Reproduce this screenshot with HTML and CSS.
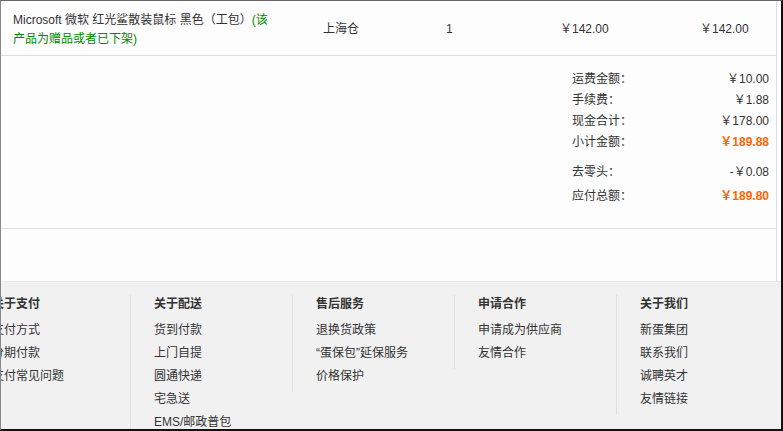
FILE: index.html
```html
<!DOCTYPE html>
<html lang="zh-CN">
<head>
    <meta charset="UTF-8">
    <title>订单确认</title>
    <link rel="stylesheet" href="styles.css">
</head>
<body>
    <div class="frame">
        <div class="order">
            <div class="item-row">
                <div class="cell name">Microsoft 微软 红光鲨散装鼠标 黑色（工包）<span class="gift">(该产品为赠品或者已下架)</span></div>
                <div class="cell">上海仓</div>
                <div class="cell">1</div>
                <div class="cell">￥142.00</div>
                <div class="cell">￥142.00</div>
            </div>
            <div class="summary">
                <div class="sum-row"><span>运费金额：</span><span>￥10.00</span></div>
                <div class="sum-row"><span>手续费：</span><span>￥1.88</span></div>
                <div class="sum-row"><span>现金合计：</span><span>￥178.00</span></div>
                <div class="sum-row"><span>小计金额：</span><span class="price">￥189.88</span></div>
                <div class="sum-row round"><span>去零头：</span><span>-￥0.08</span></div>
                <div class="sum-row total"><span>应付总额：</span><span class="price">￥189.80</span></div>
            </div>
        </div>

        <div class="footer">
            <div class="footer-cols">
                <div class="col">
                    <h4>关于支付</h4>
                    <a>支付方式</a>
                    <a>分期付款</a>
                    <a>支付常见问题</a>
                </div>
                <div class="col">
                    <h4>关于配送</h4>
                    <a>货到付款</a>
                    <a>上门自提</a>
                    <a>圆通快递</a>
                    <a>宅急送</a>
                    <a>EMS/邮政普包</a>
                </div>
                <div class="col">
                    <h4>售后服务</h4>
                    <a>退换货政策</a>
                    <a>“蛋保包”延保服务</a>
                    <a>价格保护</a>
                </div>
                <div class="col">
                    <h4>申请合作</h4>
                    <a>申请成为供应商</a>
                    <a>友情合作</a>
                </div>
                <div class="col">
                    <h4>关于我们</h4>
                    <a>新蛋集团</a>
                    <a>联系我们</a>
                    <a>诚聘英才</a>
                    <a>友情链接</a>
                </div>
            </div>
        </div>
    </div>
</body>
</html>
```

FILE: styles.css
```css
* {
    box-sizing: border-box;
}
body {
    margin: 0;
    font-family: "Liberation Sans", "Noto Sans CJK SC", sans-serif;
    font-size: 12px;
    color: #333;
    background: #fff;
}
.frame {
    width: 783px;
    height: 431px;
    border-top: 1px solid #666;
    border-left: 1px solid #888;
    border-right: 2px solid #111;
    border-bottom: 2px solid #111;
    background: #fff;
    overflow: hidden;
}
.order {
    margin-right: 4px;
    height: 280px;
    border-right: 1px solid #ddd;
    background: #fdfdfd;
}
.item-row {
    display: grid;
    grid-template-columns: 310px 123px 114px 140px 1fr;
    align-items: center;
    height: 55px;
    padding: 3px 0 0 12px;
    border-bottom: 1px solid #ddd;
}
.cell {
    line-height: 19px;
}
.name {
    width: 262px;
}
.gift {
    color: #008a00;
}
.summary {
    display: flex;
    flex-direction: column;
    align-items: flex-end;
    height: 173px;
    padding: 13px 7px 0 0;
    border-bottom: 1px solid #ddd;
}
.sum-row {
    display: flex;
    justify-content: space-between;
    width: 197px;
    line-height: 21px;
}
.sum-row.round {
    margin-top: 9px;
}
.sum-row.total {
    margin-top: 3px;
}
.price {
    color: #f60;
    font-weight: bold;
}
.footer {
    height: 150px;
    background: #f1f1f1;
    border-top: 1px solid #e6e6e6;
}
.footer-cols {
    display: flex;
    align-items: flex-start;
    margin-left: -33px;
    padding-top: 13px;
}
.col {
    width: 162px;
    padding: 0 0 4px 23px;
    border-left: 1px solid #e0e0e0;
}
.col h4 {
    margin: 0 0 6px;
    font-size: 12px;
    line-height: 18px;
    font-weight: bold;
}
.col a {
    display: block;
    line-height: 23px;
    white-space: nowrap;
}
```
